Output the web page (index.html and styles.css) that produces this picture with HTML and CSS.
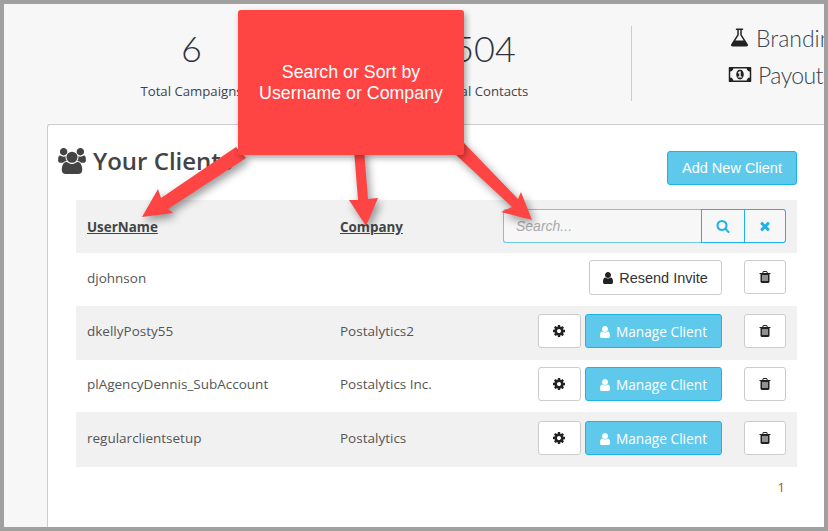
FILE: index.html
```html
<!DOCTYPE html>
<html lang="en">
<head>
<meta charset="utf-8">
<title>Your Clients</title>
<link rel="stylesheet" href="styles.css">
</head>
<body>
<svg class="sprite" width="0" height="0" aria-hidden="true">
  <symbol id="i-user" viewBox="0 0 1792 1792"><path d="M1536 1399q0 109-62.5 187t-150.5 78h-854q-88 0-150.5-78t-62.5-187q0-85 8.5-160.5t31.5-152 58.5-131 94-89 134.5-34.5q131 128 313 128t313-128q76 0 134.5 34.5t94 89 58.5 131 31.5 152 8.5 160.5zm-256-887q0 159-112.5 271.5t-271.5 112.5-271.5-112.5-112.5-271.5 112.5-271.5 271.5-112.5 271.5 112.5 112.5 271.5z"/></symbol>
  <symbol id="i-search" viewBox="0 0 1792 1792"><path d="M1216 832q0-185-131.5-316.5t-316.5-131.5-316.5 131.5-131.5 316.5 131.5 316.5 316.5 131.5 316.5-131.5 131.5-316.5zm512 832q0 52-38 90t-90 38q-54 0-90-38l-343-342q-179 124-399 124-143 0-273.5-55.5t-225-150-150-225-55.5-273.5 55.5-273.5 150-225 225-150 273.5-55.5 273.5 55.5 225 150 150 225 55.5 273.5q0 220-124 399l343 343q37 37 37 90z"/></symbol>
  <symbol id="i-times" viewBox="0 0 1792 1792"><path d="M1490 1322q0 40-28 68l-136 136q-28 28-68 28t-68-28l-294-294-294 294q-28 28-68 28t-68-28l-136-136q-28-28-28-68t28-68l294-294-294-294q-28-28-28-68t28-68l136-136q28-28 68-28t68 28l294 294 294-294q28-28 68-28t68 28l136 136q28 28 28 68t-28 68l-294 294 294 294q28 28 28 68z"/></symbol>
  <symbol id="i-cog" viewBox="0 0 1792 1792"><path d="M1152 896q0-106-75-181t-181-75-181 75-75 181 75 181 181 75 181-75 75-181zm512-109v222q0 12-8 23t-20 13l-185 28q-19 54-39 91 35 50 107 138 10 12 10 25t-9 23q-27 37-99 108t-94 71q-12 0-26-9l-138-108q-44 23-91 38-16 136-29 186-7 28-36 28h-222q-14 0-24.5-8.5t-11.5-21.5l-28-184q-49-16-90-37l-141 107q-10 9-25 9-14 0-25-11-126-114-165-168-7-10-7-23 0-12 8-23 15-21 51-66.5t54-70.5q-27-50-41-99l-183-27q-13-2-21-12.5t-8-23.5v-222q0-12 8-23t19-13l186-28q14-46 39-92-40-57-107-138-10-12-10-24 0-10 9-23 26-36 98.5-107.5t94.5-71.5q13 0 26 10l138 107q44-23 91-38 16-136 29-186 7-28 36-28h222q14 0 24.5 8.5t11.5 21.5l28 184q49 16 90 37l142-107q9-9 24-9 13 0 25 10 129 119 165 170 7 8 7 22 0 12-8 23-15 21-51 66.5t-54 70.5q26 50 41 98l183 28q13 2 21 12.5t8 23.5z"/></symbol>
  <symbol id="i-trash" viewBox="0 0 1792 1792"><path d="M704 1376v-704q0-14-9-23t-23-9h-64q-14 0-23 9t-9 23v704q0 14 9 23t23 9h64q14 0 23-9t9-23zm256 0v-704q0-14-9-23t-23-9h-64q-14 0-23 9t-9 23v704q0 14 9 23t23 9h64q14 0 23-9t9-23zm256 0v-704q0-14-9-23t-23-9h-64q-14 0-23 9t-9 23v704q0 14 9 23t23 9h64q14 0 23-9t9-23zm-544-992h448l-48-117q-7-9-17-11h-317q-10 2-17 11zm928 32v64q0 14-9 23t-23 9h-96v948q0 83-47 143.5t-113 60.5h-832q-66 0-113-58.5t-47-141.5v-952h-96q-14 0-23-9t-9-23v-64q0-14 9-23t23-9h309l70-167q15-37 54-63t79-26h320q40 0 79 26t54 63l70 167h309q14 0 23 9t9 23z"/></symbol>
  <symbol id="i-users" viewBox="0 0 1920 1792"><path d="M593 896q-162 5-265 128h-134q-82 0-138-40.500t-56-118.500q0-353 124-353 6 0 43.500 21t97.500 42.500 119 21.500q67 0 133-23-5 37-5 66 0 139 81 256zm1071 637q0 120-73 189.500t-194 69.500h-874q-121 0-194-69.500t-73-189.500q0-53 3.500-103.500t14-109 26.500-108.500 43-97.500 62-81 85.500-53.500 111.500-20q10 0 43 21.500t73 48 107 48 135 21.500 135-21.500 107-48 73-48 43-21.500q61 0 111.500 20t85.500 53.500 62 81 43 97.500 26.500 108.500 14 109 3.500 103.500zm-1024-1277q0 106-75 181t-181 75-181-75-75-181 75-181 181-75 181 75 75 181zm704 384q0 159-112.500 271.500t-271.500 112.500-271.500-112.500-112.500-271.500 112.500-271.500 271.500-112.500 271.500 112.500 112.500 271.500zm576 225q0 78-56 118.500t-138 40.500h-134q-103-123-265-128 81-117 81-256 0-29-5-66 66 23 133 23 59 0 119-21.500t97.500-42.500 43.500-21q124 0 124 353zm-128-609q0 106-75 181t-181 75-181-75-75-181 75-181 181-75 181 75 75 181z"/></symbol>
  <symbol id="i-flask" viewBox="0 0 1792 1792"><path d="M1591 1448q56 89 21.500 152.500t-140.500 63.500h-1152q-106 0-140.500-63.500t21.500-152.500l503-793v-399h-64q-26 0-45-19t-19-45 19-45 45-19h512q26 0 45 19t19 45-19 45-45 19h-64v399zm-779-725l-272 429h712l-272-429-20-31v-436h-128v436z"/></symbol>
  <symbol id="i-money" viewBox="0 0 2048 1792"><path d="M832 1152h384v-96h-128v-448h-114l-148 137 77 80q42-37 55-57h2v288h-128v96zm512-256q0 70-21 142t-59.500 134-101.500 101-138 39-138-39-101.500-101-59.500-134-21-142 21-142 59.500-134 101.500-101 138-39 138 39 101.500 101 59.500 134 21 142zm512 256v-512q-106 0-181-75t-75-181h-1152q0 106-75 181t-181 75v512q106 0 181 75t75 181h1152q0-106 75-181t181-75zm128-832v1152q0 26-19 45t-45 19h-1792q-26 0-45-19t-19-45v-1152q0-26 19-45t45-19h1792q26 0 45 19t19 45z"/></symbol>
</svg>

<div class="frame">
  <section class="stats">
    <div class="stat">
      <div class="stat-num">6</div>
      <div class="stat-label">Total Campaigns</div>
    </div>
    <div class="stat">
      <div class="stat-num">504</div>
      <div class="stat-label">Total Contacts</div>
    </div>
    <div class="stat-links">
      <a class="stat-link"><svg class="flask"><use href="#i-flask"/></svg>Branding</a>
      <a class="stat-link link-pay"><svg class="money"><use href="#i-money"/></svg>Payouts</a>
    </div>
  </section>

  <section class="panel">
    <div class="panel-head">
      <h1 class="title"><svg class="users"><use href="#i-users"/></svg>Your Clients</h1>
      <button class="btn btn-info btn-add">Add New Client</button>
    </div>

    <div class="table">
      <div class="row row-head">
        <a class="cell-user th">UserName</a>
        <a class="cell-company th">Company</a>
        <div class="search">
          <input class="search-input" placeholder="Search...">
          <button class="search-btn"><svg class="ico14"><use href="#i-search"/></svg></button>
          <button class="search-btn search-clear"><svg class="ico14"><use href="#i-times"/></svg></button>
        </div>
      </div>

      <div class="row r1">
        <span class="cell-user">djohnson</span>
        <span class="cell-company"></span>
        <div class="actions">
          <button class="btn btn-default btn-resend"><svg class="ico14"><use href="#i-user"/></svg>Resend Invite</button>
          <button class="btn btn-default btn-icon btn-trash"><svg class="ico14"><use href="#i-trash"/></svg></button>
        </div>
      </div>

      <div class="row r2 band">
        <span class="cell-user">dkellyPosty55</span>
        <span class="cell-company">Postalytics2</span>
        <div class="actions">
          <button class="btn btn-default btn-icon btn-cog"><svg class="ico14"><use href="#i-cog"/></svg></button>
          <button class="btn btn-info btn-manage"><svg class="ico14"><use href="#i-user"/></svg>Manage Client</button>
          <button class="btn btn-default btn-icon btn-trash"><svg class="ico14"><use href="#i-trash"/></svg></button>
        </div>
      </div>

      <div class="row r3">
        <span class="cell-user">plAgencyDennis_SubAccount</span>
        <span class="cell-company">Postalytics Inc.</span>
        <div class="actions">
          <button class="btn btn-default btn-icon btn-cog"><svg class="ico14"><use href="#i-cog"/></svg></button>
          <button class="btn btn-info btn-manage"><svg class="ico14"><use href="#i-user"/></svg>Manage Client</button>
          <button class="btn btn-default btn-icon btn-trash"><svg class="ico14"><use href="#i-trash"/></svg></button>
        </div>
      </div>

      <div class="row r4 band">
        <span class="cell-user">regularclientsetup</span>
        <span class="cell-company">Postalytics</span>
        <div class="actions">
          <button class="btn btn-default btn-icon btn-cog"><svg class="ico14"><use href="#i-cog"/></svg></button>
          <button class="btn btn-info btn-manage"><svg class="ico14"><use href="#i-user"/></svg>Manage Client</button>
          <button class="btn btn-default btn-icon btn-trash"><svg class="ico14"><use href="#i-trash"/></svg></button>
        </div>
      </div>
    </div>

    <div class="pager">1</div>
  </section>

  <svg class="arrows" viewBox="0 0 828 531">
    <polygon points="236,147 246,158 168,209 173,213 142,217 158,189 161,198"/>
    <polygon points="354,150 364,150 368,199 378,198 366,226 349,200 358,200"/>
    <polygon points="464,143 454,153 512,207 501,212 532,220 521,192 518,199"/>
  </svg>
  <div class="callout">Search or Sort by<br>Username or Company</div>
</div>
</body>
</html>
```
FILE: styles.css
```css
* { box-sizing: border-box; }

html, body {
  margin: 0;
  padding: 0;
  width: 828px;
  height: 531px;
  overflow: hidden;
}

.sprite { position: absolute; }

svg { fill: currentColor; display: inline-block; }

.frame {
  position: relative;
  width: 828px;
  height: 531px;
  border: 4px solid #a0a0a0;
  background: #f7f7f7;
  overflow: hidden;
  display: flex;
  flex-direction: column;
  font-family: "Open Sans", "Liberation Sans", sans-serif;
  font-size: 13.5px;
  color: #555;
}

/* stats */
.stats {
  height: 120px;
  flex: none;
  display: flex;
  padding-left: 41px;
  color: #333;
}

.stat {
  width: 293px;
  flex: none;
  text-align: center;
}

.stat-num {
  margin-top: 22px;
  height: 44px;
  font-family: "Lato", "Open Sans", sans-serif;
  font-size: 36px;
  font-weight: 300;
  line-height: 44px;
  color: #2c3440;
}

.stat-label {
  margin-top: 12px;
  font-size: 13.2px;
  line-height: 18px;
  color: #3c4450;
}

.stat-links {
  flex: none;
  margin-top: 22px;
  height: 75px;
  border-left: 1px solid #ccc;
  padding-left: 97px;
  white-space: nowrap;
  font-family: "Lato", "Open Sans", sans-serif;
  font-size: 23px;
  font-weight: 300;
  color: #3c4450;
}

.stat-link {
  display: flex;
  align-items: center;
  height: 37px;
}

.stat-link:first-child { margin-top: -7px; }

.link-pay { letter-spacing: -.6px; }

.flask {
  width: 21px;
  height: 21px;
  margin-right: 6px;
  color: #222;
}

.money {
  width: 24px;
  height: 21px;
  margin: 0 6px 0 -1px;
  color: #222;
}

/* panel */
.panel {
  flex: 1;
  margin-left: 43px;
  background: #fff;
  border-left: 1px solid #ccc;
  border-top: 1px solid #ccc;
  border-top-left-radius: 3px;
  padding: 0 27px 0 10px;
}

.panel-head {
  height: 75px;
  display: flex;
  justify-content: space-between;
  align-items: flex-start;
}

.title {
  margin: 20px 0 0;
  display: flex;
  align-items: center;
  font-size: 24px;
  font-weight: 550;
  line-height: 32px;
  color: #444;
}

.users {
  width: 28px;
  height: 26px;
  margin-right: 7px;
  color: #444;
}

.btn {
  font-family: "Liberation Sans", sans-serif;
  font-size: 14.5px;
  border-radius: 3px;
  border: 1px solid #ccc;
  background: #fff;
  color: #333;
  padding: 0;
  display: flex;
  align-items: center;
  justify-content: center;
}

.btn-info {
  background: #5fc9ec;
  border-color: #1cb3e8;
  color: #fff;
}

.btn-add {
  width: 130px;
  height: 34px;
  margin-top: 26px;
}

.table { margin-left: 18px; }

.row {
  display: flex;
  align-items: flex-start;
}

.band { background: #f1f1f1; }

.row-head {
  height: 53px;
  background: #f1f1f1;
  align-items: center;
}

.r1 { height: 53px; padding-top: 7px; }
.r2 { height: 54px; padding-top: 8px; }
.r3 { height: 52px; padding-top: 7px; }
.r4 { height: 55px; padding-top: 9px; }

.cell-user {
  width: 264px;
  padding-left: 11px;
  flex: none;
  line-height: 36px;
}

.cell-company {
  width: 150px;
  flex: none;
  line-height: 36px;
}

.r2 .cell-user, .r2 .cell-company,
.r3 .cell-user, .r3 .cell-company,
.r4 .cell-user, .r4 .cell-company {
  line-height: 34px;
}

.th {
  font-size: 13.4px;
  font-weight: 700;
  text-decoration: underline;
  color: #444;
  line-height: 18px;
  padding-top: 1px;
}

.search {
  margin: 0 0 2px 13px;
  width: 283px;
  height: 34px;
  display: flex;
  flex: none;
}

.search-input {
  flex: 1;
  min-width: 0;
  height: 34px;
  border: 1px solid #6cc9e9;
  border-right: 0;
  border-radius: 3px 0 0 3px;
  background: #f7f7f7;
  padding: 0 12px;
  font-family: "Liberation Sans", sans-serif;
  font-size: 14px;
  font-style: italic;
  outline: none;
}

.search-input::placeholder { color: #aaa; opacity: 1; }

.search-btn {
  width: 44px;
  height: 34px;
  padding: 0;
  border: 1px solid #1cb3e8;
  background: #f7f7f7;
  color: #1cb3e8;
  display: flex;
  align-items: center;
  justify-content: center;
}

.search-clear {
  width: 41px;
  border-left: 0;
  border-radius: 0 3px 3px 0;
}

.actions {
  margin-left: auto;
  display: flex;
  padding-right: 11px;
  align-items: flex-start;
}

.ico14 { width: 14px; height: 14px; }

.btn-resend {
  width: 133px;
  height: 35px;
  margin-right: 22px;
  padding-right: 2px;
}

.btn-resend .ico14 { margin-right: 4px; color: #222; }

.btn-icon {
  width: 43px;
  height: 34px;
  color: #222;
}

.btn-cog { margin-right: 4px; padding-right: 2px; }

.btn-trash { width: 42px; }

.btn-manage {
  width: 137px;
  height: 34px;
  margin-right: 22px;
  padding: 1px 2px 0 0;
  font-family: "Open Sans", sans-serif;
  font-size: 13.7px;
}

.btn-manage .ico14 { margin-right: 4px; }

.pager {
  text-align: right;
  padding-right: 12px;
  margin-top: 11px;
  line-height: 18px;
  font-size: 13px;
  color: #b5500f;
}

/* overlays */
.arrows {
  position: absolute;
  left: -4px;
  top: -4px;
  width: 828px;
  height: 531px;
  fill: #ff4444;
  filter: drop-shadow(3px 4px 4px rgba(0, 0, 0, .4));
}

.callout {
  position: absolute;
  left: 234px;
  top: 6px;
  width: 226px;
  height: 145px;
  padding-top: 52px;
  border-radius: 3px;
  background: #ff4444;
  box-shadow: 2px 3px 6px rgba(0, 0, 0, .35);
  color: #fff;
  font-family: "Liberation Sans", sans-serif;
  font-size: 17.8px;
  line-height: 21px;
  text-align: center;
}
```
